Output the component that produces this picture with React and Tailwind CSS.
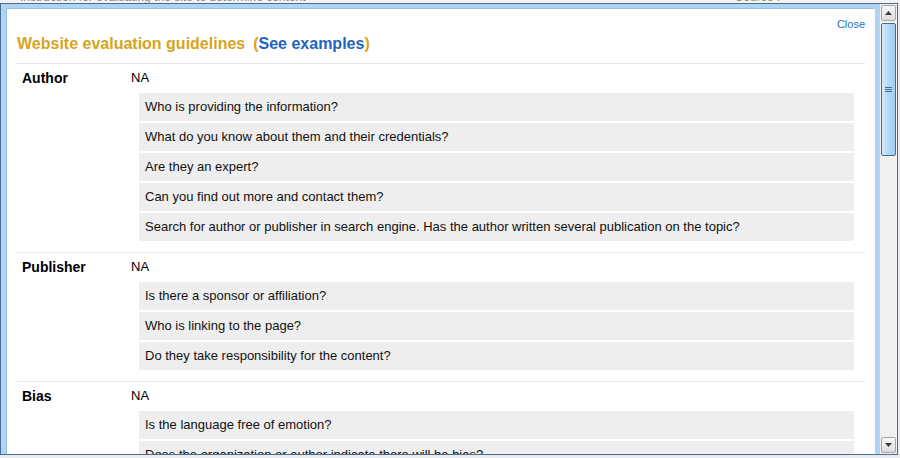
import React from 'react';

const sections = [
  {
    label: 'Author',
    value: 'NA',
    questions: [
      'Who is providing the information?',
      'What do you know about them and their credentials?',
      'Are they an expert?',
      'Can you find out more and contact them?',
      'Search for author or publisher in search engine. Has the author written several publication on the topic?',
    ],
  },
  {
    label: 'Publisher',
    value: 'NA',
    questions: [
      'Is there a sponsor or affiliation?',
      'Who is linking to the page?',
      'Do they take responsibility for the content?',
    ],
  },
  {
    label: 'Bias',
    value: 'NA',
    questions: [
      'Is the language free of emotion?',
      'Does the organization or author indicate there will be bias?',
      'Is the information presented objectively?',
    ],
  },
];

const Scrollbar = () => (
  <div className="w-[17px] bg-[#f0f0f0] flex flex-col items-stretch">
    <div className="h-[16px] mx-[1px] mt-[1px] rounded-[2px] border border-[#a7a7a7] bg-gradient-to-b from-[#f7f7f7] to-[#dcdcdc] flex items-center justify-center">
      <svg width="7" height="4" viewBox="0 0 7 4">
        <path d="M0 4 L3.5 0 L7 4 Z" fill="#3a3a3a" />
      </svg>
    </div>
    <div className="h-[133px] mx-[1px] mt-[2px] rounded-[2px] border border-[#3d6f99] bg-gradient-to-r from-[#d4eafb] via-[#b3d8f5] to-[#a4cdef] flex flex-col items-center justify-center gap-[1px]">
      <div className="w-[7px] h-[1px] bg-[#3d6f99]" />
      <div className="w-[7px] h-[1px] bg-[#3d6f99]" />
      <div className="w-[7px] h-[1px] bg-[#3d6f99]" />
    </div>
    <div className="flex-1" />
    <div className="h-[16px] mx-[1px] mb-[1px] rounded-[2px] border border-[#a7a7a7] bg-gradient-to-b from-[#f7f7f7] to-[#dcdcdc] flex items-center justify-center">
      <svg width="7" height="4" viewBox="0 0 7 4">
        <path d="M0 0 L3.5 4 L7 0 Z" fill="#3a3a3a" />
      </svg>
    </div>
  </div>
);

export default function App() {
  return (
    <div className="w-[900px] h-[458px] overflow-hidden bg-[#e9ebee] font-['Liberation_Sans',Arial,sans-serif]">
      <div className="h-[3px] overflow-hidden bg-[#f3f3f3]">
        <div className="-mt-[9px] pl-[20px] text-[12px] leading-[12px] text-[#8a8a8a] flex">
          <span>Instruction for evaluating the site to determine content</span>
          <span className="ml-auto mr-[120px] text-[#8a9a55]">Source :</span>
        </div>
      </div>
      <div className="w-[898px] h-[452px] border border-[#466f96] bg-[#aed3f3] flex pl-[5px]">
        <div className="w-[869px] mt-[4px] bg-white border-l border-t border-[#9bbfdf] overflow-hidden px-[10px]">
          <div className="pt-[9px] h-[22px] text-right text-[11px] leading-[13px] text-[#2a6db5]">
            Close
          </div>
          <div className="mt-[4px] h-[18px] text-[16px] leading-[18px] font-bold text-[#d6a420]">
            Website evaluation guidelines
            <span className="ml-[8px]">(</span>
            <span className="text-[#1f64bf]">See examples</span>
            <span>)</span>
          </div>
          <div className="mt-[10px]">
            {sections.map((s) => (
              <div key={s.label} className="border-t border-[#e6e6e6] pt-[6px] pb-[9px] flex">
                <div className="w-[114px] pl-[5px] text-[14px] leading-[16px] font-bold text-black">
                  {s.label}
                </div>
                <div className="flex-1">
                  <div className="text-[13px] leading-[16px] text-black">{s.value}</div>
                  <div className="mt-[7px] ml-[8px] mr-[11px] flex flex-col gap-[2px]">
                    {s.questions.map((q) => (
                      <div key={q} className="h-[28px] bg-[#eeeeee] px-[6px] flex items-center text-[13px] text-[#111]">
                        {q}
                      </div>
                    ))}
                  </div>
                  <div className="h-[2px]" />
                </div>
              </div>
            ))}
          </div>
        </div>
        <div className="w-[5px]" />
        <Scrollbar />
      </div>
    </div>
  );
}
